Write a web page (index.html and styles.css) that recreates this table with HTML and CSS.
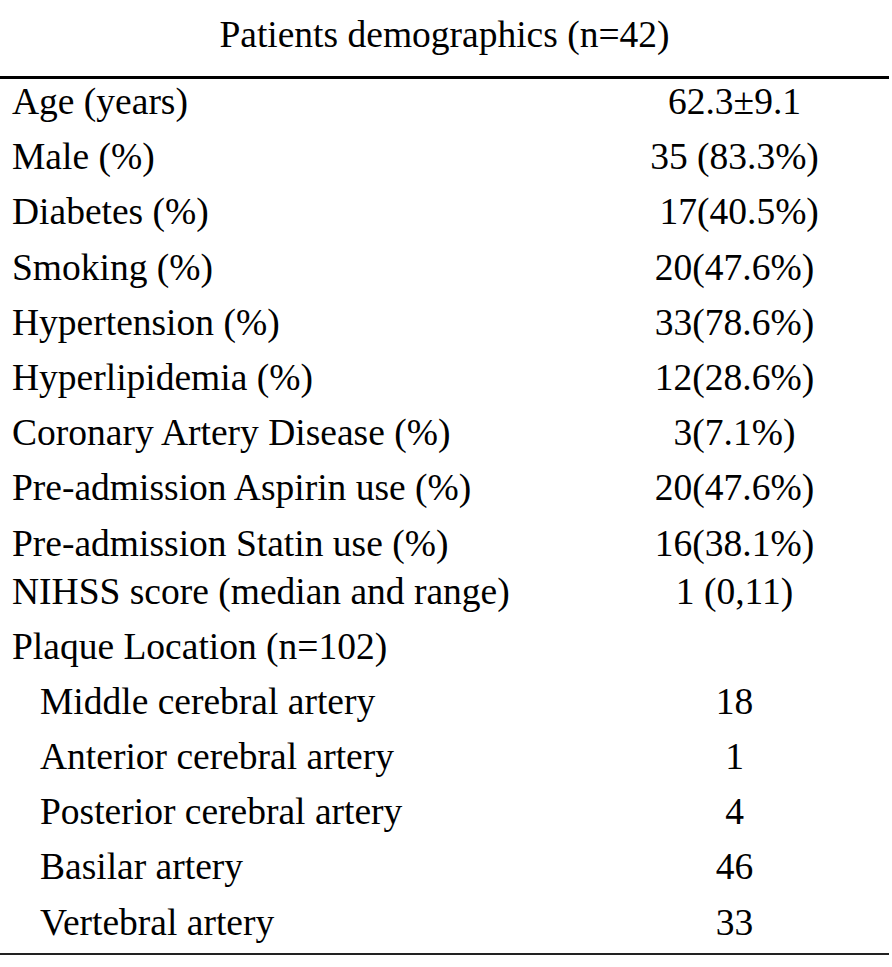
FILE: index.html
```html
<!DOCTYPE html>
<html>
<head>
<meta charset="utf-8">
<link rel="stylesheet" href="styles.css">
</head>
<body>
<div class="table">
  <div class="title">Patients demographics (n=42)</div>
  <div class="body">
    <div class="row"><div class="label">Age (years)</div><div class="value">62.3±9.1</div></div>
    <div class="row"><div class="label">Male (%)</div><div class="value">35 (83.3%)</div></div>
    <div class="row"><div class="label">Diabetes (%)</div><div class="value">&nbsp;17(40.5%)</div></div>
    <div class="row"><div class="label">Smoking (%)</div><div class="value">20(47.6%)</div></div>
    <div class="row"><div class="label">Hypertension (%)</div><div class="value">33(78.6%)</div></div>
    <div class="row"><div class="label">Hyperlipidemia (%)</div><div class="value">12(28.6%)</div></div>
    <div class="row"><div class="label">Coronary Artery Disease (%)</div><div class="value">3(7.1%)</div></div>
    <div class="row"><div class="label">Pre-admission Aspirin use (%)</div><div class="value">20(47.6%)</div></div>
    <div class="row row-tight"><div class="label">Pre-admission Statin use (%)</div><div class="value">16(38.1%)</div></div>
    <div class="row"><div class="label">NIHSS score (median and range)</div><div class="value">1 (0,11)</div></div>
    <div class="row"><div class="label">Plaque Location (n=102)</div><div class="value"></div></div>
    <div class="row"><div class="label sub">Middle cerebral artery</div><div class="value">18</div></div>
    <div class="row"><div class="label sub">Anterior cerebral artery</div><div class="value">1</div></div>
    <div class="row"><div class="label sub">Posterior cerebral artery</div><div class="value">4</div></div>
    <div class="row"><div class="label sub">Basilar artery</div><div class="value">46</div></div>
    <div class="row row-last"><div class="label sub">Vertebral artery</div><div class="value">33</div></div>
  </div>
</div>
</body>
</html>
```
FILE: styles.css
```css
html, body {
  margin: 0;
  padding: 0;
  background: #fff;
}

.table {
  width: 889px;
  font-family: "Liberation Serif", "Times New Roman", serif;
  font-size: 37.5px;
  line-height: 45px;
  color: #000;
}

.title {
  text-align: center;
  padding: 12px 0 19px 0;
}

.body {
  border-top: 3px solid #000;
  border-bottom: 2px solid #222;
}

.row {
  display: grid;
  grid-template-columns: 580px 1fr;
  height: 55.2px;
}

.row-tight {
  height: 48px;
}

.row-last {
  height: 53px;
}

.label {
  padding-left: 12px;
  white-space: nowrap;
}

.label.sub {
  padding-left: 40px;
}

.value {
  text-align: center;
  white-space: nowrap;
}
```
